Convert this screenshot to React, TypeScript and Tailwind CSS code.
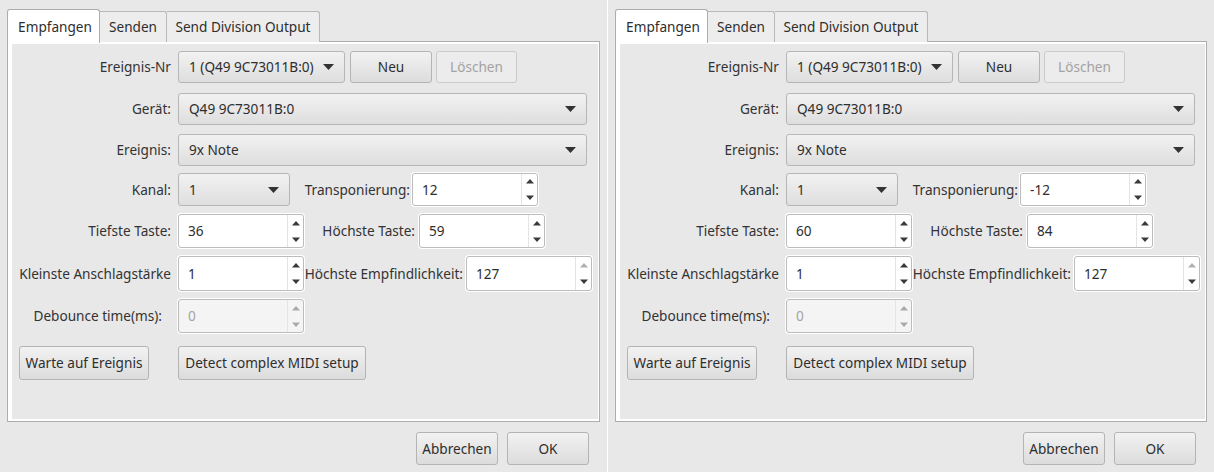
import React from "react";

interface DialogData {
  transpose: string;
  lowest: string;
  highest: string;
}

function Arrow({ up = false, color = "#3a3a3a" }: { up?: boolean; color?: string }) {
  return (
    <svg width="8" height="5" viewBox="0 0 8 5" className="block">
      <polygon points={up ? "0,4.5 8,4.5 4,0" : "0,0.5 8,0.5 4,5"} fill={color} />
    </svg>
  );
}

function ComboArrow() {
  return (
    <svg width="11" height="6" viewBox="0 0 11 6" className="block shrink-0">
      <polygon points="0,0 11,0 5.5,6" fill="#333" />
    </svg>
  );
}

function Combo({ value, width }: { value: string; width: string }) {
  return (
    <div
      className={`${width} h-full flex items-center justify-between pl-[10px] pr-[10px] rounded-[3px] border border-[#b6b6b6] bg-gradient-to-b from-[#f2f2f2] to-[#dedede] text-[#2e2e2e]`}
    >
      <span className="whitespace-nowrap">{value}</span>
      <ComboArrow />
    </div>
  );
}

function Button({
  children,
  width,
  disabled = false,
  extra = "",
}: {
  children: React.ReactNode;
  width: string;
  disabled?: boolean;
  extra?: string;
}) {
  return (
    <div
      className={`${width} ${extra} h-full flex items-center justify-center whitespace-nowrap rounded-[3px] border ${
        disabled
          ? "border-[#cbcbcb] bg-[#ececec] text-[#a3a3a3]"
          : "border-[#b4b4b4] bg-gradient-to-b from-[#f2f2f2] to-[#dcdcdc] text-[#2e2e2e]"
      }`}
    >
      {children}
    </div>
  );
}

function Spin({
  value,
  disabled = false,
  upDisabled = false,
}: {
  value: string;
  disabled?: boolean;
  upDisabled?: boolean;
}) {
  const arrowColor = disabled ? "#a9a9a9" : "#3a3a3a";
  return (
    <div
      className={`w-[126px] h-full flex rounded-[3px] border border-[#bcbcbc] shadow-[0_0_0_1px_#ffffff] ${
        disabled ? "bg-[#f4f4f4] text-[#a3a3a3]" : "bg-white text-[#2e2e2e]"
      }`}
    >
      <div className="flex-1 flex items-center pl-[9px]">{value}</div>
      <div className="w-[16px] flex flex-col border-l border-[#e4e4e4]">
        <div className="flex-1 flex items-center justify-center">
          <Arrow up color={upDisabled ? "#b0b0b0" : arrowColor} />
        </div>
        <div className="flex-1 flex items-center justify-center">
          <Arrow color={arrowColor} />
        </div>
      </div>
    </div>
  );
}

function Label({ children, width = "w-[153px]" }: { children: React.ReactNode; width?: string }) {
  return <div className={`${width} shrink-0 text-right whitespace-nowrap text-[#333333]`}>{children}</div>;
}

function Dialog({ data, width }: { data: DialogData; width: string }) {
  return (
    <div className={`${width} h-full flex flex-col px-[7px]`}>
      {/* tabs */}
      <div className="flex items-end h-[42px] pt-[8px] relative z-10">
        <div className="w-[93px] h-[34px] -mb-px flex items-center justify-center pl-[3px] bg-white border border-b-0 border-[#adadad] rounded-t-[3px] text-[#2e2e2e]">
          Empfangen
        </div>
        <div className="w-[67px] h-[31px] flex items-center justify-center bg-[#ededed] border border-l-0 border-b-0 border-[#b8b8b8] rounded-tr-[3px] text-[#2e2e2e]">
          Senden
        </div>
        <div className="w-[153px] h-[31px] flex items-center justify-center bg-[#ededed] border border-l-0 border-b-0 border-[#b8b8b8] rounded-tr-[3px] text-[#2e2e2e]">
          Send Division Output
        </div>
      </div>

      {/* pane */}
      <div className="h-[381px] -mt-px border border-[#adadad] bg-white flex flex-col">
        <div className="flex-1 ml-[4px] mt-[2px] mb-[2px] mr-px bg-[#e8e8e8] flex flex-col pl-[6px]">
          <div className="h-[32px] mt-[7px] flex items-center gap-[7px]">
            <Label>Ereignis-Nr</Label>
            <Combo value="1 (Q49 9C73011B:0)" width="w-[167px]" />
            <Button width="w-[82px]" extra="-ml-[2px]">Neu</Button>
            <Button width="w-[81px]" extra="-ml-[3px]" disabled>
              Löschen
            </Button>
          </div>
          <div className="h-[32px] mt-[10px] flex items-center gap-[7px]">
            <Label>Gerät:</Label>
            <Combo value="Q49 9C73011B:0" width="w-[409px]" />
          </div>
          <div className="h-[32px] mt-[9px] flex items-center gap-[7px]">
            <Label>Ereignis:</Label>
            <Combo value="9x Note" width="w-[409px]" />
          </div>
          <div className="h-[33px] mt-[7px] flex items-center">
            <Label>Kanal:</Label>
            <div className="ml-[7px] h-full">
              <Combo value="1" width="w-[112px]" />
            </div>
            <Label width="w-[120px]">Transponierung:</Label>
            <div className="ml-[2px] h-full">
              <Spin value={data.transpose} />
            </div>
          </div>
          <div className="h-[34px] mt-[8px] flex items-center">
            <Label>Tiefste Taste:</Label>
            <div className="ml-[7px] h-full">
              <Spin value={data.lowest} />
            </div>
            <Label width="w-[111px]">Höchste Taste:</Label>
            <div className="ml-[4px] h-full">
              <Spin value={data.highest} />
            </div>
          </div>
          <div className="h-[35px] mt-[8px] flex items-center">
            <Label>Kleinste Anschlagstärke</Label>
            <div className="ml-[7px] h-full">
              <Spin value="1" />
            </div>
            <Label width="w-[159px]">Höchste Empfindlichkeit:</Label>
            <div className="ml-[3px] h-full">
              <Spin value="127" upDisabled />
            </div>
          </div>
          <div className="h-[34px] mt-[8px] flex items-center">
            <Label width="w-[144px]">Debounce time(ms):</Label>
            <div className="ml-[16px] h-full">
              <Spin value="0" disabled />
            </div>
          </div>
          <div className="h-[34px] mt-[13px] flex items-center">
            <Button width="w-[130px]" extra="ml-px">Warte auf Ereignis</Button>
            <Button width="w-[188px]" extra="ml-[29px]">Detect complex MIDI setup</Button>
          </div>
        </div>
      </div>

      {/* dialog buttons */}
      <div className="h-[33px] mt-[10px] flex justify-end gap-[9px] pr-[11px]">
        <Button width="w-[82px]">Abbrechen</Button>
        <Button width="w-[82px]">OK</Button>
      </div>
    </div>
  );
}

export default function App() {
  return (
    <div className="w-[1214px] h-[472px] flex bg-[#e8e8e8] font-['Noto_Sans',sans-serif] text-[13.6px] leading-none overflow-hidden">
      <Dialog width="w-[607px]" data={{ transpose: "12", lowest: "36", highest: "59" }} />
      <div className="w-px h-full bg-white" />
      <Dialog width="w-[606px]" data={{ transpose: "-12", lowest: "60", highest: "84" }} />
    </div>
  );
}
